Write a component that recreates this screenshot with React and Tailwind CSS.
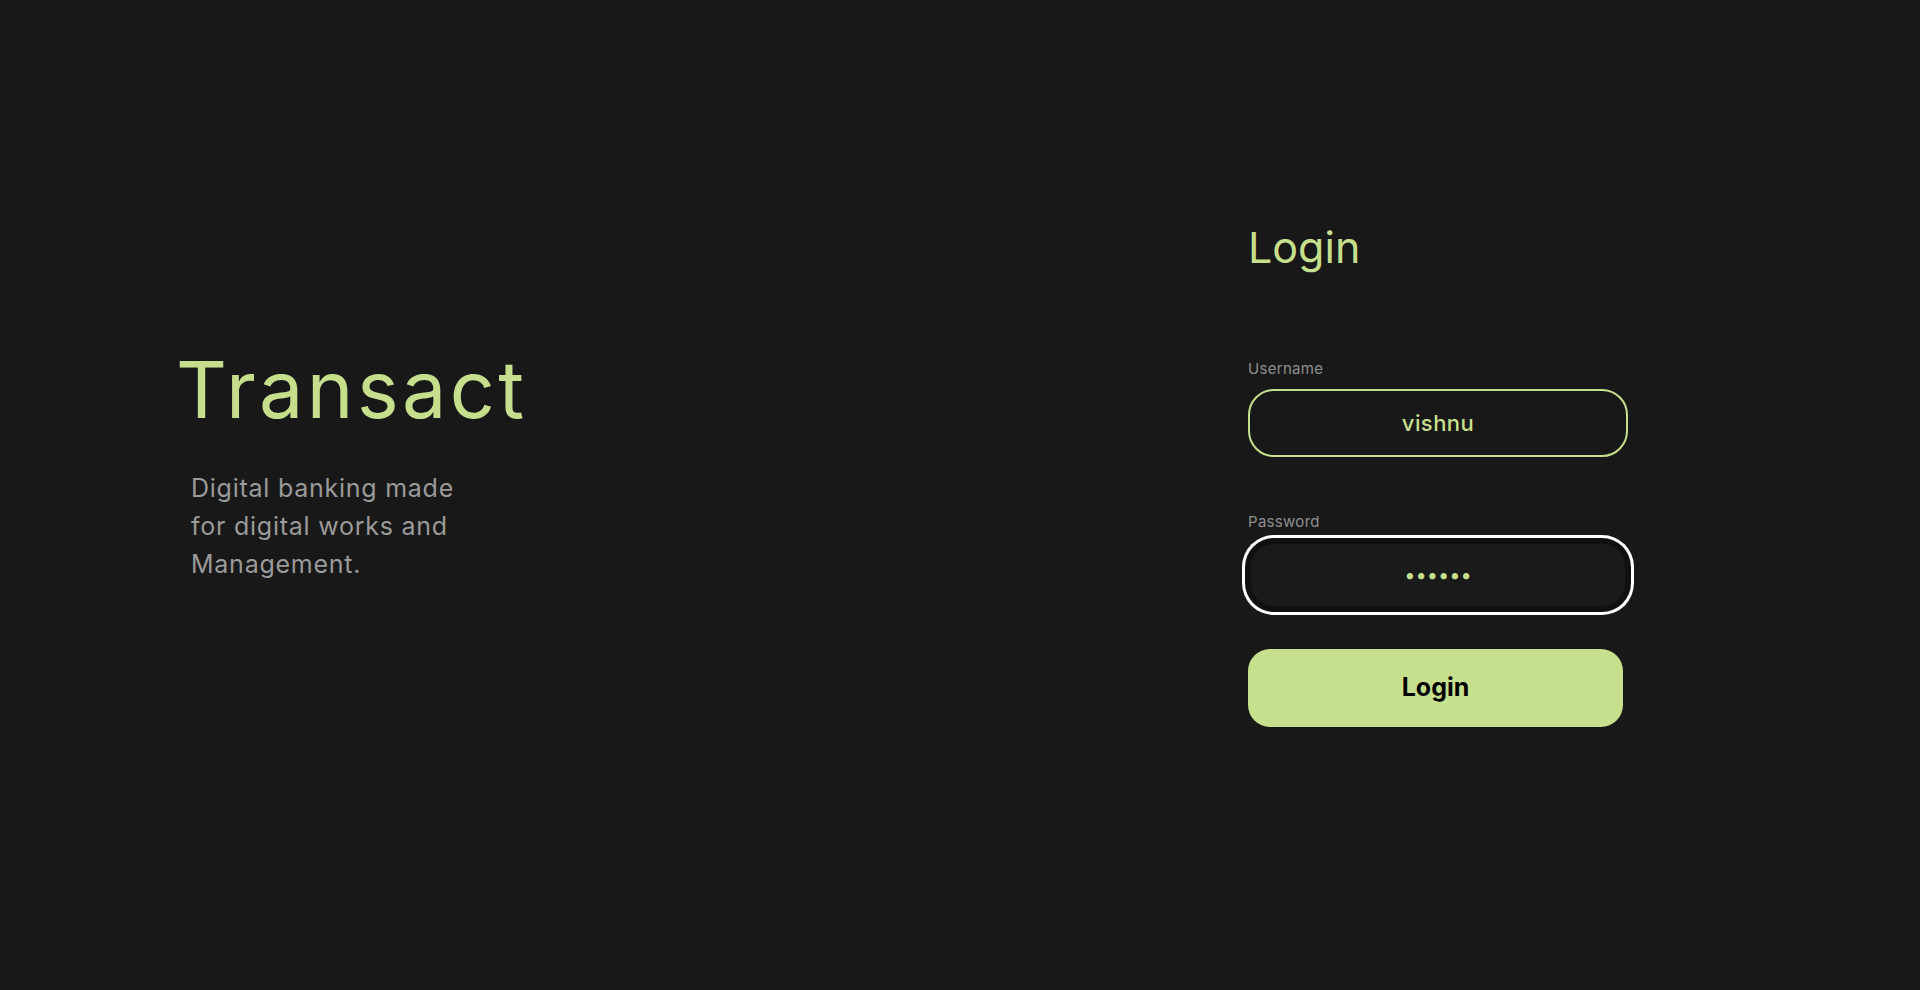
import React, { useState } from 'react';

function App() {
  const [username, setUsername] = useState('vishnu');
  const [password, setPassword] = useState('123456');

  return (
    <div className="w-screen h-screen bg-[#181818] flex overflow-hidden" style={{ fontFamily: 'Inter, "Noto Sans", sans-serif' }}>
      {/* Brand */}
      <div className="w-[1248px] pl-[176px] pt-[346px]">
        <h1 className="text-[79px] leading-[1.1] text-[#c6df8c] tracking-[0.043em]">Transact</h1>
        <p className="mt-[36px] ml-[15px] w-[300px] text-[25px] leading-[38px] tracking-[0.03em] text-[#9a9a9a]">
          Digital banking made for digital works and Management.
        </p>
      </div>

      {/* Login form */}
      <div className="pt-[222px] flex flex-col">
        <h2 className="text-[43px] leading-[1.2] text-[#c6df8c]">Login</h2>

        <label className="mt-[85px] text-[15px] leading-[20px] tracking-[0.02em] text-[#8e8e8e]">Username</label>
        <input
          value={username}
          onChange={(e) => setUsername(e.target.value)}
          className="mt-[10px] w-[380px] h-[68px] rounded-[26px] border-2 border-[#c6df8c] bg-transparent text-center text-[22px] font-medium tracking-[0.02em] text-[#c6df8c] outline-none"
        />

        <label className="mt-[55px] text-[15px] leading-[20px] tracking-[0.02em] text-[#8e8e8e]">Password</label>
        <input
          type="password"
          value={password}
          onChange={(e) => setPassword(e.target.value)}
          className="mt-[9px] w-[380px] h-[68px] rounded-[26px] border-[3px] border-[#101010] bg-[#1a1a1a] text-center text-[20px] text-[#c6df8c] outline-none shadow-[0_0_0_3px_#101010,0_0_0_6px_#ffffff]"
        />

        <button className="mt-[40px] w-[375px] h-[78px] rounded-[22px] bg-[#c7e08e] text-[25px] font-bold text-black">
          Login
        </button>
      </div>
    </div>
  );
}

export default App;
